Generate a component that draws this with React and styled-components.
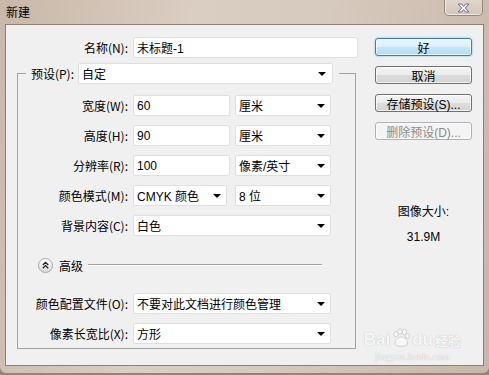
import styled, { createGlobalStyle } from "styled-components";

const GlobalStyle = createGlobalStyle`
  html, body {
    margin: 0;
    padding: 0;
    background: #8f857c;
  }
  body {
    font-family: "Liberation Sans", "Noto Sans CJK SC", sans-serif;
    font-size: 12px;
    color: #000;
  }
  * { box-sizing: border-box; }
`;

const Window = styled.div`
  width: 489px;
  height: 373px;
  display: flex;
  flex-direction: column;
  padding: 0 5px 7px 5px;
  background: linear-gradient(100deg, #c9b8a9 0%, #dacdc1 35%, #d6c9bd 60%, #c8b7a8 100%);
  border-radius: 0 0 6px 6px;
`;

const TitleBar = styled.div`
  height: 24px;
  display: flex;
  align-items: flex-start;
  padding-left: 1px;
`;

const Title = styled.div`
  line-height: 24px;
  font-family: "Noto Sans CJK SC", sans-serif;
  font-size: 12px;
`;

const CloseBtn = styled.div`
  margin-left: auto;
  margin-right: 1px;
  width: 39px;
  height: 16px;
  border: 1px solid #96887c;
  border-top: none;
  border-radius: 0 0 5px 5px;
  background: linear-gradient(#e0d6cc, #d2c6ba);
  box-shadow: inset 0 -1px 0 rgba(255, 255, 255, 0.6), inset 1px 0 0 rgba(255, 255, 255, 0.5);
  display: flex;
  align-items: center;
  justify-content: center;
`;

const Client = styled.div`
  flex: 1;
  position: relative;
  display: flex;
  border: 1px solid #8c8074;
  background: #f0f0f0;
`;

const LeftCol = styled.div`
  width: 352px;
  padding-top: 12px;
  display: flex;
  flex-direction: column;
`;

const RightCol = styled.div`
  padding: 13px 0 0 17px;
  display: flex;
  flex-direction: column;
  gap: 10px;
`;

const Row = styled.div`
  display: flex;
  align-items: center;
  height: 21px;
  gap: 5px;
`;

const Label = styled.div`
  width: ${(p) => p.$w || 110}px;
  text-align: right;
  white-space: nowrap;
  font-family: "Noto Sans CJK SC", sans-serif;
  font-size: 12px;
`;

const Field = styled.div`
  width: ${(p) => p.$w}px;
  height: 21px;
  margin-right: ${(p) => p.$mr || 0}px;
  background: #fff;
  border: 1px solid #dedfe3;
  border-radius: 2px;
  display: flex;
  align-items: center;
  padding-left: 3px;
  white-space: nowrap;
  font-family: "Liberation Sans", "Noto Sans CJK SC", sans-serif;
  font-size: 12px;
`;

const Arrow = styled.span`
  margin-left: auto;
  margin-right: ${(p) => p.$r || 5}px;
  width: 0;
  height: 0;
  border-left: 4px solid transparent;
  border-right: 4px solid transparent;
  border-top: 4px solid #000;
`;

const Group = styled.fieldset`
  margin: 5px 0 0 11px;
  padding: 0;
  width: 339px;
  min-width: 0;
  border: 1px solid #a3a3a3;
`;

const Legend = styled.legend`
  margin-left: 8px;
  padding: 0 6px 0 0;
  display: flex;
  align-items: center;
  gap: 4px;
`;

const Rows = styled.div`
  padding: 11px 0 4px 0;
  display: flex;
  flex-direction: column;
  gap: 9px;
`;

const Advanced = styled.div`
  height: 21px;
  margin: 10px 0 8px 0;
  padding-left: 20px;
  display: flex;
  align-items: center;
  gap: 6px;
  font-family: "Noto Sans CJK SC", sans-serif;
`;

const Rule = styled.div`
  width: 234px;
  height: 1px;
  margin-left: -1px;
  margin-top: -2px;
  background: #a3a3a3;
  box-shadow: 0 1px 0 #fff;
`;

const Button = styled.div`
  width: 97px;
  height: 18px;
  border-radius: 3px;
  display: flex;
  align-items: center;
  justify-content: center;
  font-family: "Liberation Sans", "Noto Sans CJK SC", sans-serif;
  font-size: 12px;
  border: 1px solid ${(p) => (p.$primary ? "#3c7fb1" : p.$disabled ? "#adb2b5" : "#707070")};
  color: ${(p) => (p.$disabled ? "#8a8a8a" : "#000")};
  background: ${(p) =>
    p.$primary
      ? "linear-gradient(#eaf6fd 0%, #d9f0fc 50%, #c4e6f9 50%, #b2dcf4 100%)"
      : p.$disabled
      ? "#f4f4f4"
      : "linear-gradient(#f4f4f4 0%, #ebebeb 50%, #dddddd 50%, #d2d2d2 100%)"};
  box-shadow: ${(p) =>
    p.$primary
      ? "inset 0 0 0 1px rgba(255,255,255,0.7), 0 0 2px #56b4ef"
      : "inset 0 0 0 1px rgba(255,255,255,0.7)"};
`;

const Info = styled.div`
  margin-top: 50px;
  width: 97px;
  text-align: center;
  line-height: 25px;
  font-family: "Liberation Sans", "Noto Sans CJK SC", sans-serif;
`;

const Watermark = styled.div`
  position: absolute;
  right: 22px;
  bottom: 3px;
  display: flex;
  flex-direction: column;
  align-items: center;
  color: #f7f7f7;
  text-shadow: 0 0 1px #c8c8c8, 0 0 1px #c8c8c8;
  pointer-events: none;
`;

const MarkTop = styled.div`
  display: flex;
  align-items: flex-end;
  font-family: "Liberation Sans", sans-serif;
  font-weight: bold;
  font-size: 17px;
  line-height: 17px;
`;

const MarkCn = styled.span`
  font-family: "Noto Sans CJK SC", sans-serif;
  font-size: 13px;
  line-height: 15px;
  margin-left: 2px;
`;

const MarkUrl = styled.div`
  font-family: "Liberation Serif", serif;
  font-size: 10px;
  margin-top: 3px;
`;

function Select({ w, mr, value, r }) {
  return (
    <Field $w={w} $mr={mr}>
      {value}
      <Arrow $r={r} />
    </Field>
  );
}

function CloseGlyph() {
  return (
    <svg width="13" height="10" viewBox="0 0 13 10">
      <path
        d="M1 1 H4.5 L6.5 3.3 L8.5 1 H12 L8.3 5 L12 9 H8.5 L6.5 6.7 L4.5 9 H1 L4.7 5 Z"
        fill="#eceef3"
        stroke="#73737f"
        strokeWidth="1"
        strokeLinejoin="round"
      />
    </svg>
  );
}

function ExpandIcon() {
  return (
    <svg width="15" height="15" viewBox="0 0 15 15">
      <defs>
        <linearGradient id="eg" x1="0" y1="0" x2="0" y2="1">
          <stop offset="0" stopColor="#ffffff" />
          <stop offset="1" stopColor="#d9d9d9" />
        </linearGradient>
      </defs>
      <circle cx="7.5" cy="7.5" r="7" fill="url(#eg)" stroke="#a8a8a8" />
      <path d="M4.8 7 L7.5 4.4 L10.2 7 M4.8 10.2 L7.5 7.6 L10.2 10.2" fill="none" stroke="#222" strokeWidth="1.3" />
    </svg>
  );
}

function Paw() {
  return (
    <svg width="20" height="20" viewBox="0 0 20 20" style={{ margin: "0 1px 0 1px" }}>
      <g fill="#f7f7f7" stroke="#c8c8c8" strokeWidth="0.8">
        <ellipse cx="5" cy="6" rx="2.2" ry="2.8" />
        <ellipse cx="9" cy="3.5" rx="2.2" ry="2.8" />
        <ellipse cx="13.5" cy="4" rx="2.2" ry="2.8" />
        <ellipse cx="16.5" cy="8" rx="2" ry="2.5" />
        <path d="M4 16 C4 11 8 9 10.5 9 C13 9 16.5 11 16.5 16 C16.5 19 4 19 4 16 Z" />
      </g>
    </svg>
  );
}

export default function App() {
  return (
    <>
      <GlobalStyle />
      <Window>
        <TitleBar>
          <Title>新建</Title>
          <CloseBtn>
            <CloseGlyph />
          </CloseBtn>
        </TitleBar>
        <Client>
          <LeftCol>
            <Row>
              <Label $w={122}>名称(N):</Label>
              <Field $w={225}>未标题-1</Field>
            </Row>
            <Group>
              <Legend>
                <Label $w={48}>预设(P):</Label>
                <Select w={255} r={6} value="自定" />
              </Legend>
              <Rows>
                <Row>
                  <Label>宽度(W):</Label>
                  <Field $w={97}>60</Field>
                  <Select w={96} value="厘米" />
                </Row>
                <Row>
                  <Label>高度(H):</Label>
                  <Field $w={97}>90</Field>
                  <Select w={96} value="厘米" />
                </Row>
                <Row>
                  <Label>分辨率(R):</Label>
                  <Field $w={97}>100</Field>
                  <Select w={96} value="像素/英寸" />
                </Row>
                <Row>
                  <Label>颜色模式(M):</Label>
                  <Select w={94} mr={3} value="CMYK 颜色" />
                  <Select w={96} value="8 位" />
                </Row>
                <Row>
                  <Label>背景内容(C):</Label>
                  <Select w={198} value="白色" />
                </Row>
                <Advanced>
                  <ExpandIcon />
                  <span>高级</span>
                  <Rule />
                </Advanced>
                <Row>
                  <Label>颜色配置文件(O):</Label>
                  <Select w={198} value="不要对此文档进行颜色管理" />
                </Row>
                <Row>
                  <Label>像素长宽比(X):</Label>
                  <Select w={198} value="方形" />
                </Row>
              </Rows>
            </Group>
          </LeftCol>
          <RightCol>
            <Button $primary>好</Button>
            <Button>取消</Button>
            <Button>存储预设(S)...</Button>
            <Button $disabled>删除预设(D)...</Button>
            <Info>
              <div>图像大小:</div>
              <div>31.9M</div>
            </Info>
          </RightCol>
          <Watermark>
            <MarkTop>
              Bai
              <Paw />
              du
              <MarkCn>经验</MarkCn>
            </MarkTop>
            <MarkUrl>jingyan.baidu.com</MarkUrl>
          </Watermark>
        </Client>
      </Window>
    </>
  );
}
